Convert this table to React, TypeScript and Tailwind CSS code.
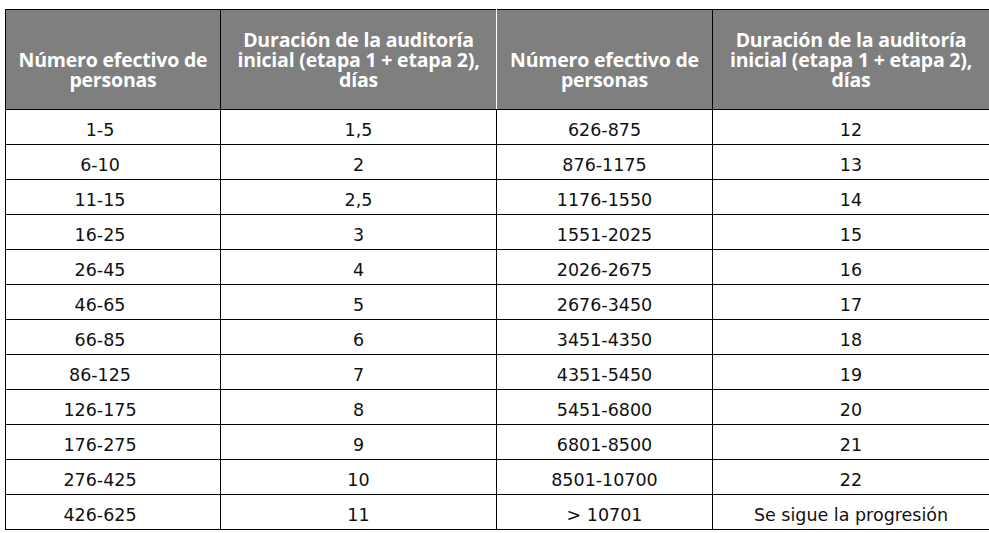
const rows: [string, string, string, string][] = [
  ["1-5", "1,5", "626-875", "12"],
  ["6-10", "2", "876-1175", "13"],
  ["11-15", "2,5", "1176-1550", "14"],
  ["16-25", "3", "1551-2025", "15"],
  ["26-45", "4", "2026-2675", "16"],
  ["46-65", "5", "2676-3450", "17"],
  ["66-85", "6", "3451-4350", "18"],
  ["86-125", "7", "4351-5450", "19"],
  ["126-175", "8", "5451-6800", "20"],
  ["176-275", "9", "6801-8500", "21"],
  ["276-425", "10", "8501-10700", "22"],
  ["426-625", "11", "> 10701", "Se sigue la progresión"],
];

export default function App() {
  return (
    <div className="min-h-screen w-full bg-white pl-[5px] pt-[9px] font-['Open_Sans','Liberation_Sans',sans-serif]">
      <table className="table-fixed border-collapse border border-black w-[984px]">
        <colgroup>
          <col className="w-[215px]" />
          <col className="w-[276px]" />
          <col className="w-[216px]" />
          <col className="w-[277px]" />
        </colgroup>
        <thead>
          <tr className="h-[100px] bg-[#7f7f7f] text-white text-[19.5px] font-bold leading-[20px] tracking-[-0.2px]">
            <th className="border border-black align-bottom pb-[19px] px-0 text-center whitespace-nowrap">
              Número efectivo de
              <br />
              personas
            </th>
            <th className="border border-black border-r-white align-bottom pb-[19px] px-0 text-center whitespace-nowrap">
              Duración de la auditoría
              <br />
              inicial (etapa 1 + etapa 2),
              <br />
              días
            </th>
            <th className="border border-black align-bottom pb-[19px] px-0 text-center whitespace-nowrap">
              Número efectivo de
              <br />
              personas
            </th>
            <th className="border border-black align-bottom pb-[19px] px-0 text-center whitespace-nowrap">
              Duración de la auditoría
              <br />
              inicial (etapa 1 + etapa 2),
              <br />
              días
            </th>
          </tr>
        </thead>
        <tbody className="text-[17.5px] text-[#111] leading-[22px] font-['DejaVu_Sans','Open_Sans',sans-serif]">
          {rows.map(r => (
            <tr key={r[0]} className="h-[35px]">
              <td className="border border-black text-center align-middle pt-[6px] pb-0 pr-[26px]">
                {r[0]}
              </td>
              <td className="border border-black text-center align-middle pt-[6px] pb-0">
                {r[1]}
              </td>
              <td className="border border-black text-center align-middle pt-[6px] pb-0">
                {r[2]}
              </td>
              <td className="border border-black text-center align-middle pt-[6px] pb-0">
                {r[3]}
              </td>
            </tr>
          ))}
        </tbody>
      </table>
    </div>
  );
}
